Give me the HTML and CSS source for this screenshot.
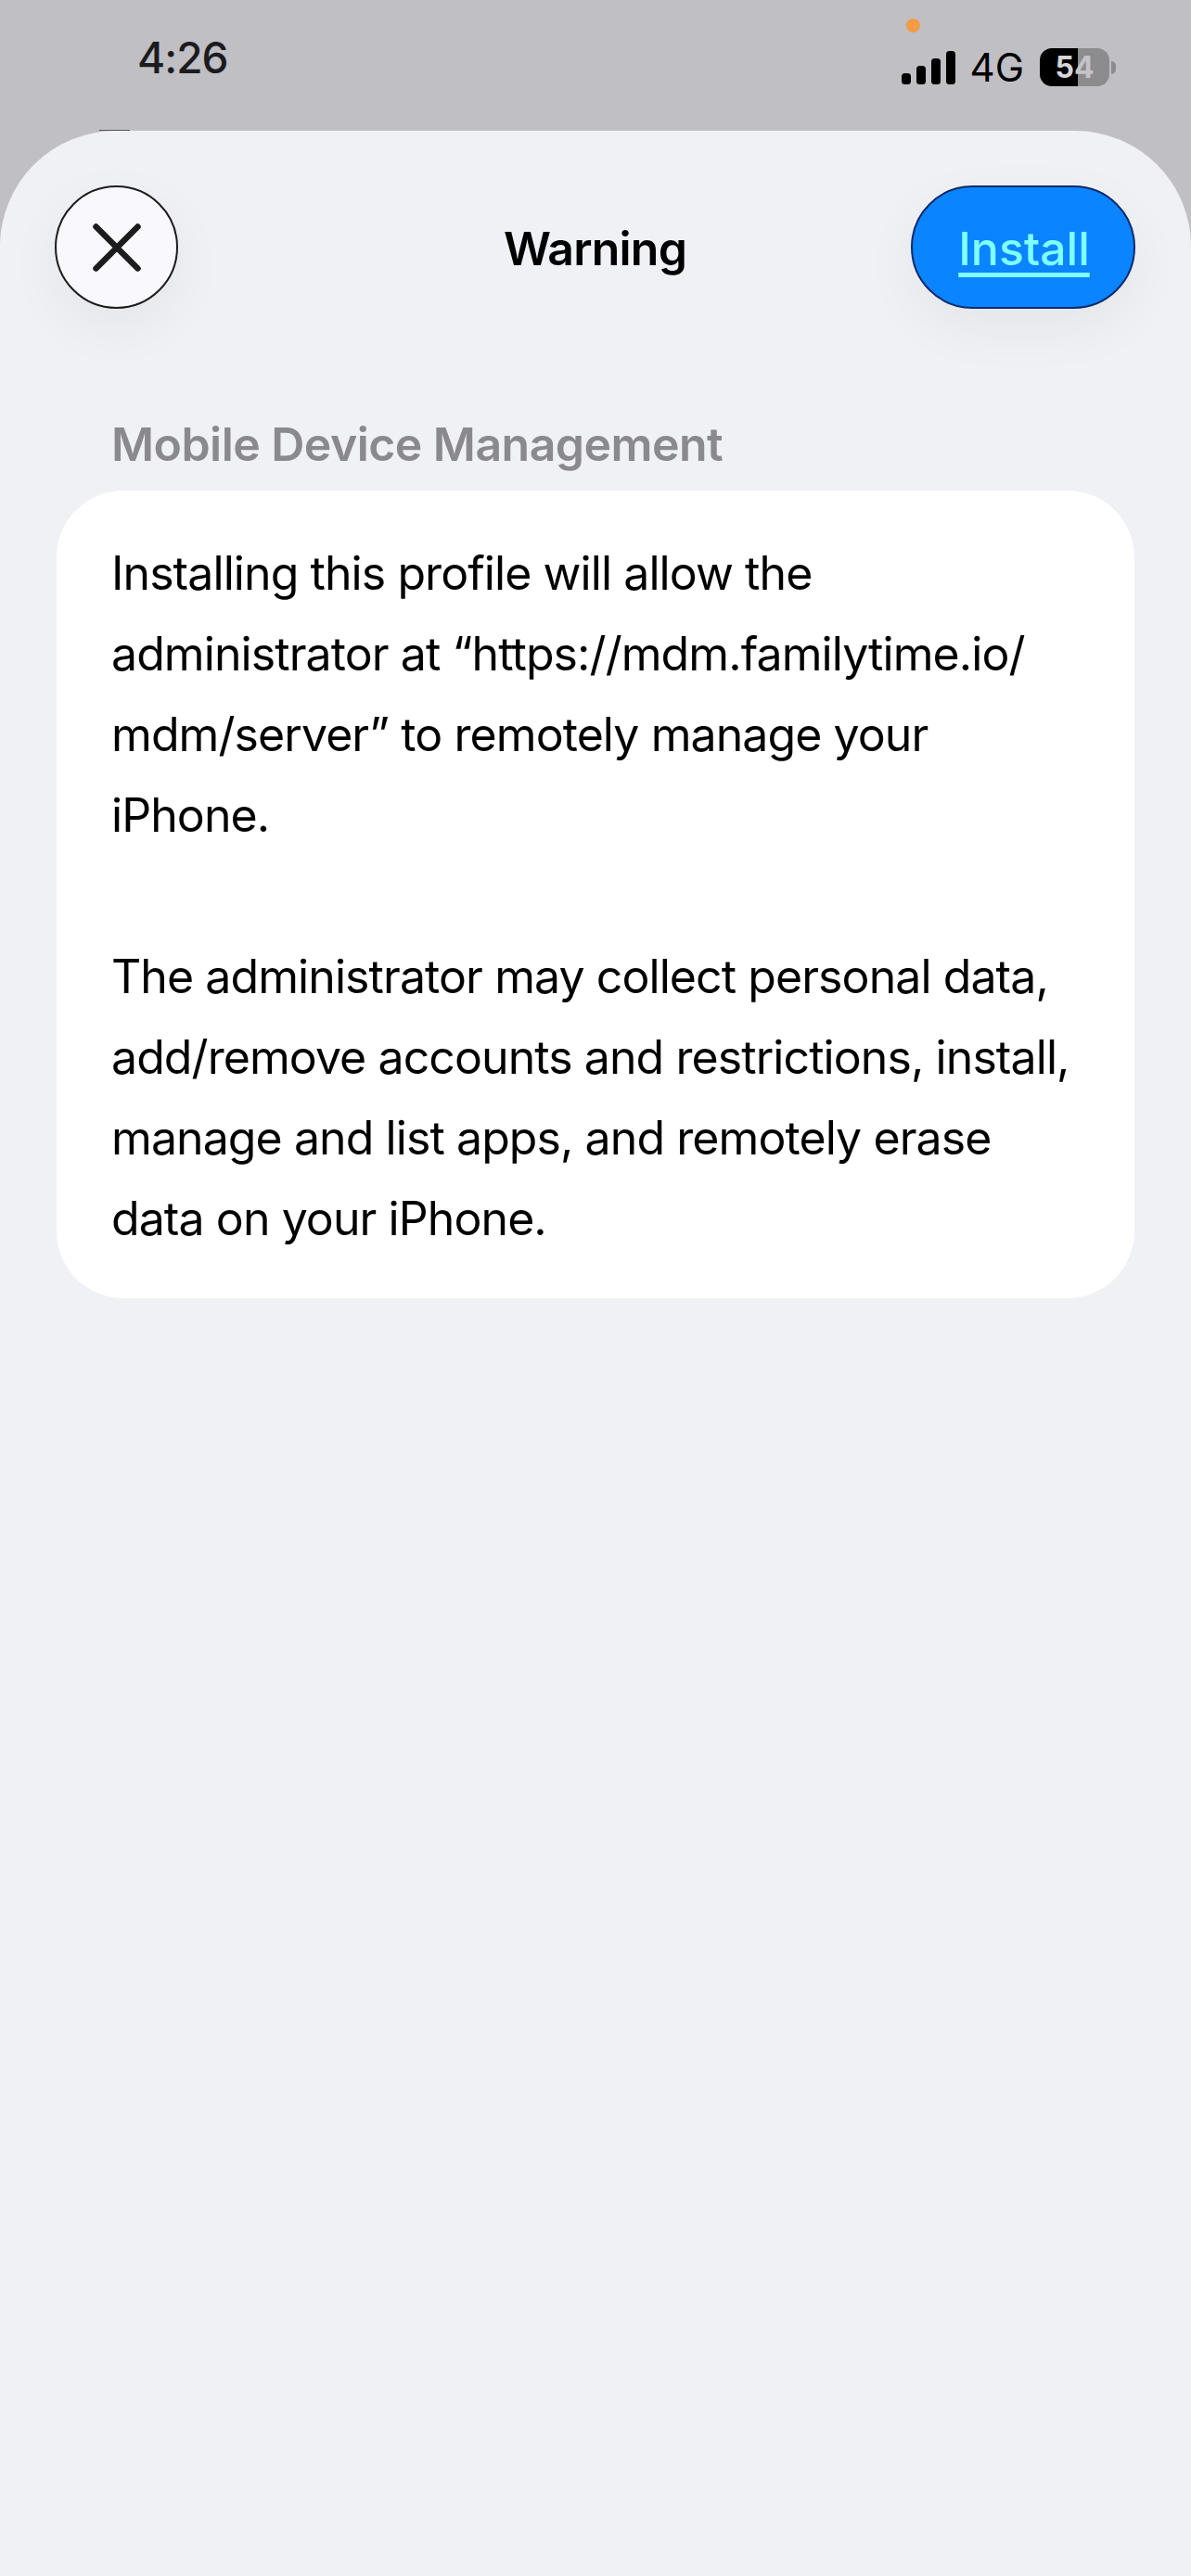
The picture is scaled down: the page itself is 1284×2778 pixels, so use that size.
FILE: index.html
```html
<!DOCTYPE html>
<html>
<head>
    <title>Warning</title>
    <link rel="stylesheet" href="styles.css">
</head>
<body>

<div class="status-bar">
    <div class="time">4:26</div>
    <div class="status-right">
        <span class="camera-dot"></span>
        <svg class="signal" width="58" height="36" viewBox="0 0 58 36">
            <rect x="0" y="24" width="10" height="12" rx="3.5"/>
            <rect x="16" y="16" width="10" height="20" rx="3.5"/>
            <rect x="32" y="8" width="10" height="28" rx="3.5"/>
            <rect x="48" y="0" width="10" height="36" rx="3.5"/>
        </svg>
        <span class="network">4G</span>
        <div class="battery">
            <div class="battery-body"><span class="digit-a">5</span><span class="digit-b">4</span></div>
            <span class="battery-cap"></span>
        </div>
    </div>
</div>

<div class="sheet">
    <span class="peek"></span>
    <div class="sheet-header">
        <button class="close-btn">
            <svg width="52" height="52" viewBox="0 0 52 52">
                <path d="M3.5 3.5 L48.5 48.5 M48.5 3.5 L3.5 48.5" fill="none" stroke="#1c1c1e" stroke-width="6.5" stroke-linecap="round"/>
            </svg>
        </button>
        <h1>Warning</h1>
        <a class="install-btn" href="#">Install</a>
    </div>

    <h2 class="section-title">Mobile Device Management</h2>
    <div class="card">
        <p>Installing this profile will allow the<br>administrator at “https://mdm.familytime.io/<br>mdm/server” to remotely manage your<br>iPhone.</p>
        <p>The administrator may collect personal data,<br>add/remove accounts and restrictions, install,<br>manage and list apps, and remotely erase<br>data on your iPhone.</p>
    </div>
</div>

</body>
</html>
```

FILE: styles.css
```css
html, body {
    height: 100%;
}

body {
    margin: 0;
    background-color: #c0bfc4;
    font-family: Inter, "Liberation Sans", sans-serif;
    color: #000;
    display: flex;
    flex-direction: column;
}

.status-bar {
    height: 141px;
    flex-shrink: 0;
    display: flex;
    justify-content: space-between;
    align-items: flex-start;
    box-sizing: border-box;
    padding: 34px 81px 0 148px;
}

.time {
    font-size: 46px;
    line-height: 56px;
    font-weight: 500;
    color: #1c1c1e;
    letter-spacing: -1px;
}

.status-right {
    position: relative;
    display: flex;
    align-items: center;
    padding-top: 18px;
}

.camera-dot {
    position: absolute;
    left: 5px;
    top: -14px;
    width: 15px;
    height: 15px;
    border-radius: 50%;
    background-color: #f59a45;
}

.signal {
    fill: #000;
    margin-right: 16px;
}

.network {
    font-size: 42px;
    line-height: 40px;
    font-weight: 400;
    margin-right: 17px;
}

.battery {
    display: flex;
    align-items: center;
}

.battery-body {
    width: 75px;
    height: 41px;
    border-radius: 13px;
    background: linear-gradient(to right, #000 0, #000 41px, #8c8c8e 41px, #8c8c8e 100%);
    display: flex;
    justify-content: center;
    align-items: center;
    font-size: 32px;
    font-weight: 700;
    line-height: 41px;
}

.digit-a {
    color: #d6d6d8;
}

.digit-b {
    color: #c4c4c6;
}

.battery-cap {
    width: 5px;
    height: 14px;
    margin-left: 2px;
    border-radius: 0 7px 7px 0;
    background-color: #8c8c8e;
}

.sheet {
    position: relative;
    flex: 1;
    background-color: #f0f1f5;
    border-radius: 125px 125px 0 0;
    box-sizing: border-box;
    padding: 59px 60px 0 59px;
}

.peek {
    position: absolute;
    left: 107px;
    top: -1px;
    width: 33px;
    height: 1px;
    background-color: #55555a;
}

.sheet-header {
    display: grid;
    grid-template-columns: 1fr auto 1fr;
    align-items: center;
    height: 133px;
    margin-bottom: 118px;
}

.close-btn {
    width: 133px;
    height: 133px;
    padding: 0;
    border: 2px solid #1c1c1e;
    border-radius: 50%;
    background-color: #f9f9fd;
    box-shadow: 0 20px 60px rgba(0, 0, 0, 0.05);
    display: flex;
    justify-content: center;
    align-items: center;
}

.sheet-header h1 {
    margin: 2px 0 0;
    font-size: 50px;
    font-weight: 600;
    letter-spacing: -0.8px;
}

.install-btn {
    justify-self: end;
    width: 242px;
    height: 133px;
    box-sizing: border-box;
    border: 2px solid #0a2a6a;
    border-radius: 67px;
    background-color: #0a84ff;
    box-shadow: 0 20px 60px rgba(0, 0, 0, 0.05);
    color: #7fffff;
    font-size: 50px;
    font-weight: 500;
    text-underline-offset: 8px;
    text-decoration-thickness: 5px;
    display: flex;
    justify-content: center;
    align-items: center;
    padding: 2px 0 0 2px;
}

.section-title {
    margin: 0 0 22px 61px;
    font-size: 50px;
    line-height: 56px;
    font-weight: 600;
    color: #8a8a8e;
    letter-spacing: -0.55px;
}

.card {
    background-color: #fff;
    border-radius: 72px;
    margin: 0 1px 0 2px;
    padding: 46px 20px 0 59px;
    font-size: 50px;
    line-height: 87px;
    letter-spacing: -0.92px;
    height: 871px;
    box-sizing: border-box;
}

.card p {
    margin: 0 0 87px;
}

.card p:last-child {
    margin-bottom: 0;
}
```
